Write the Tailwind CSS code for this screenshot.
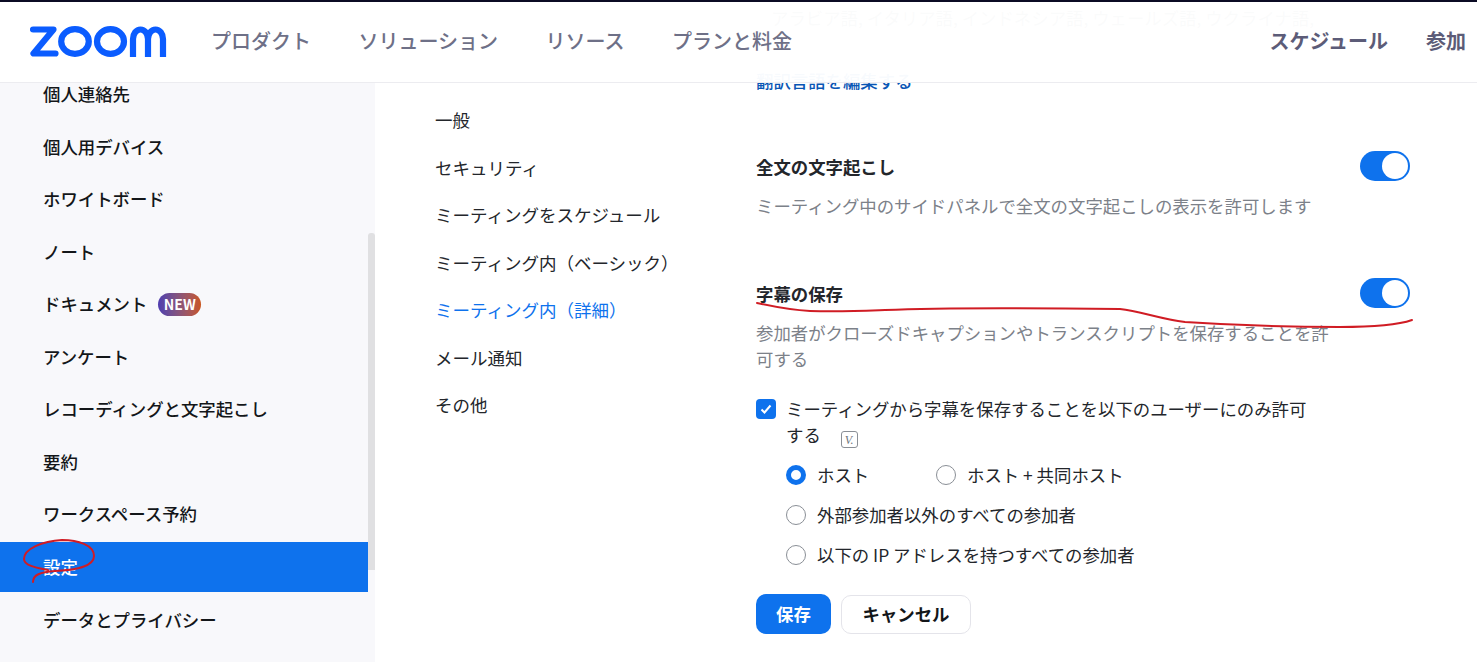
<!DOCTYPE html>
<html lang="ja">
<head>
    <meta charset="UTF-8">
    <title>Zoom 設定</title>
    <script src="https://cdn.jsdelivr.net/npm/@tailwindcss/browser@4"></script>
</head>
<body class="font-['Noto_Sans_CJK_JP','Noto_Sans',sans-serif] bg-white">
<div class="relative flex h-[662px] w-[1477px] overflow-hidden">

    <!-- top bar, sits over the scrolled page -->
    <header class="absolute top-0 left-0 z-10 flex h-[83px] w-full items-center border-t-2 border-b border-t-[#0b0b24] border-b-[#ececf0] bg-white/[0.97] pb-[2px] pl-[30px] pr-[11px]">
        <svg class="w-[137px] h-[31px]" viewBox="0 0 137 31" fill="none" stroke="#0b5cff" stroke-width="6.2">
            <path d="M3 3.500h20.500L3.500 27.500h22" stroke-linejoin="round" stroke-linecap="round"/>
            <ellipse cx="45" cy="15.500" rx="13.800" ry="12.300"/>
            <ellipse cx="80.500" cy="15.500" rx="13.500" ry="12.300"/>
            <path d="M103 31V13a7.500 9.500 0 0 1 15 0V31M118 13a7.500 9.500 0 0 1 15 0V31"/>
        </svg>
        <nav class="ml-[44px] flex gap-[47.500px] text-[20px] font-medium text-[#6e7087]">
            <a>プロダクト</a>
            <a>ソリューション</a>
            <a>リソース</a>
            <a>プランと料金</a>
        </nav>
        <div class="ml-auto flex gap-[38px] text-[20px] font-bold text-[#5c5c78]">
            <a>スケジュール</a>
            <a>参加</a>
        </div>
    </header>

    <!-- left menu -->
    <aside class="relative h-full w-[375px] shrink-0 bg-[#f8f8fb] pt-[68.100px] text-[17.400px] font-medium text-[#131619]">
        <div class="w-[368px]">
            <div class="flex h-[52.500px] items-center pl-[43px]">個人連絡先</div>
            <div class="flex h-[52.500px] items-center pl-[43px]">個人用デバイス</div>
            <div class="flex h-[52.500px] items-center pl-[43px]">ホワイトボード</div>
            <div class="flex h-[52.500px] items-center pl-[43px]">ノート</div>
            <div class="flex h-[52.500px] items-center pl-[43px]">ドキュメント
                <span class="ml-[11px] rounded-full bg-gradient-to-r from-[#4f3cb0] to-[#c9541a] px-[5.500px] text-[14px] font-bold leading-[23px] text-white">NEW</span>
            </div>
            <div class="flex h-[52.500px] items-center pl-[43px]">アンケート</div>
            <div class="flex h-[52.500px] items-center pl-[43px]">レコーディングと文字起こし</div>
            <div class="flex h-[52.500px] items-center pl-[43px]">要約</div>
            <div class="mb-[1.400px] flex h-[52.500px] items-center pl-[43px]">ワークスペース予約</div>
            <div class="flex h-[50px] items-center bg-[#0e72ed] pl-[43px] text-white">設定</div>
            <div class="flex h-[56px] items-center pl-[43px]">データとプライバシー</div>
        </div>
        <div class="absolute right-0 top-[233px] h-[337px] w-[7px] rounded-t-[3px] bg-[#e0e0e2]"></div>
    </aside>

    <!-- settings nav -->
    <nav class="flex w-[381px] shrink-0 flex-col pl-[60px] pt-[96.500px] text-[17.500px] text-[#23262b]">
        <a class="flex h-[47.500px] items-center">一般</a>
        <a class="flex h-[47.500px] items-center">セキュリティ</a>
        <a class="flex h-[47.500px] items-center">ミーティングをスケジュール</a>
        <a class="flex h-[47.500px] items-center">ミーティング内（ベーシック）</a>
        <a class="flex h-[47.500px] items-center text-[#0e72ed]">ミーティング内（詳細）</a>
        <a class="flex h-[47.500px] items-center">メール通知</a>
        <a class="flex h-[47.500px] items-center">その他</a>
    </nav>

    <!-- settings content -->
    <main class="flex w-[654px] shrink-0 flex-col pt-[5px] text-[17.400px] text-[#23262b]">
        <p class="whitespace-nowrap pl-[15px] leading-[26px] text-[#6e7680]">アラビア語, イタリア語, インドネシア語, ウェールズ語, ウクライナ語,</p>
        <a class="mt-[37px] leading-[26px] font-medium text-[#0956b5]">翻訳言語を編集する</a>

        <div class="mt-[57px] flex items-start justify-between">
            <h3 class="mt-[3px] font-bold">全文の文字起こし</h3>
            <div class="mb-[4px] flex h-[30px] w-[50px] items-center justify-end rounded-full bg-[#0e72ed] pr-[2px]"><span class="h-[26px] w-[26px] rounded-full bg-white"></span></div>
        </div>
        <p class="mt-[8px] w-[580px] leading-[26px] text-[#7c8189]">ミーティング中のサイドパネルで全文の文字起こしの表示を許可します</p>

        <div class="mt-[59px] flex items-start justify-between">
            <h3 class="mt-[3px] font-bold">字幕の保存</h3>
            <div class="mb-[2px] flex h-[30px] w-[50px] items-center justify-end rounded-full bg-[#0e72ed] pr-[2px]"><span class="h-[26px] w-[26px] rounded-full bg-white"></span></div>
        </div>
        <p class="mt-[10px] w-[580px] leading-[26px] text-[#7c8189]">参加者がクローズドキャプションやトランスクリプトを保存することを許可する</p>

        <div class="mt-[24px] flex gap-[10px]">
            <span class="mt-[3px] flex h-[20px] w-[20px] shrink-0 items-center justify-center rounded-[4px] bg-[#0e72ed]">
                <svg class="h-[14px] w-[14px]" viewBox="0 0 14 14" fill="none" stroke="#fff" stroke-width="2"><path d="M2.500 7.500l3 3 6-7"/></svg>
            </span>
            <div class="w-[530px] leading-[25.500px]">ミーティングから字幕を保存することを以下のユーザーにのみ許可する
                <span class="ml-[16px] inline-flex h-[17px] w-[17px] items-center justify-center rounded-[3px] border border-[#8a8f96] align-[-2px] font-['Liberation_Serif',serif] text-[12px] italic leading-none text-[#6e7680]">V.</span>
            </div>
        </div>

        <div class="mt-[14px] ml-[30px] flex flex-col gap-[14px]">
            <div class="flex h-[26px] items-center">
                <span class="h-[20px] w-[20px] rounded-full border-[5px] border-[#0e72ed] bg-white"></span>
                <span class="ml-[11px] w-[119px]">ホスト</span>
                <span class="h-[20px] w-[20px] rounded-full border border-[#8a8f96] bg-white"></span>
                <span class="ml-[11px]">ホスト + 共同ホスト</span>
            </div>
            <div class="flex h-[26px] items-center">
                <span class="h-[20px] w-[20px] rounded-full border border-[#8a8f96] bg-white"></span>
                <span class="ml-[11px]">外部参加者以外のすべての参加者</span>
            </div>
            <div class="flex h-[26px] items-center">
                <span class="h-[20px] w-[20px] rounded-full border border-[#8a8f96] bg-white"></span>
                <span class="ml-[11px]">以下の IP アドレスを持つすべての参加者</span>
            </div>
        </div>

        <div class="mt-[26px] flex items-center gap-[10px]">
            <button class="h-[40px] w-[75px] rounded-[10px] bg-[#0e72ed] font-bold text-white">保存</button>
            <button class="h-[39px] w-[130px] rounded-[10px] border border-[#e4e4ea] bg-white font-bold text-[#131619]">キャンセル</button>
        </div>
    </main>

    <!-- red pen marks drawn on the screenshot -->
    <svg class="pointer-events-none absolute left-0 top-0 z-20 h-[662px] w-[1477px]" viewBox="0 0 1477 662" fill="none" stroke="#d01c24" stroke-width="2" stroke-linecap="round">
        <path d="M757 303C775 307 790 310 810 311C840 312 860 311 885 310C930 308 1040 308 1120 309C1140 311 1160 319 1185 322C1230 325 1290 327 1340 327C1370 327 1395 326 1412 320"/>
        <path d="M33 582C33 575 40 572 55 571C75 570 94 567 94 556C94 545 78 540 62 540C42 541 24 549 24 559C24 566 38 568 48 570"/>
    </svg>
</div>
</body>
</html>
